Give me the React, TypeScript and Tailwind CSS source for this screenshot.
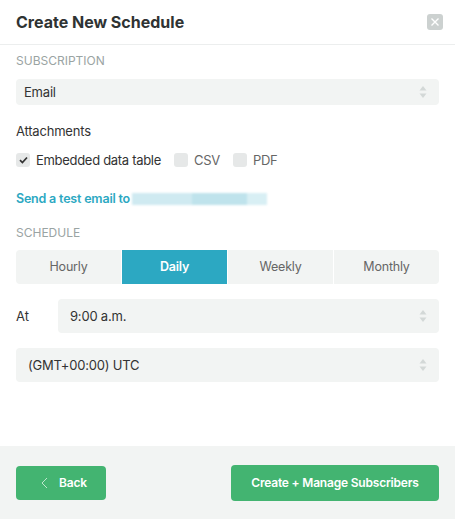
const Arrows = () => (
  <svg width="8" height="14" viewBox="0 0 8 14" className="shrink-0">
    <path d="M4 1 L7.5 5.5 H0.5 Z" fill="#d3d8d7" />
    <path d="M4 13 L7.5 8.5 H0.5 Z" fill="#d3d8d7" />
  </svg>
);

const Select = ({ value, className = "" }: { value: string; className?: string }) => (
  <div
    className={`flex items-center justify-between rounded bg-[#f2f4f3] text-[13px] tracking-[-0.2px] text-[#333] ${className}`}
  >
    <span>{value}</span>
    <Arrows />
  </div>
);

const Check = ({ checked, label }: { checked?: boolean; label: string }) => (
  <label className="flex items-center gap-[6px]">
    <span className="flex h-[14px] w-[14px] items-center justify-center rounded-[3px] bg-[#e6e8e8]">
      {checked && (
        <svg width="9" height="8" viewBox="0 0 9 8">
          <path d="M1 4.2 L3.4 6.5 L8 1.5" stroke="#333" strokeWidth="1.7" fill="none" />
        </svg>
      )}
    </span>
    <span className={checked ? "text-[#333]" : "text-[#666]"}>{label}</span>
  </label>
);

export default function App() {
  const tabs = ["Hourly", "Daily", "Weekly", "Monthly"];
  return (
    <div className="flex h-[519px] w-[455px] flex-col bg-white font-['Inter',sans-serif] text-[#333]">
      <div className="flex h-[45px] shrink-0 items-center justify-between border-b border-[#eceeee] pl-4 pr-3">
        <h1 className="text-[16px] font-bold text-[#2f3333]">Create New Schedule</h1>
        <button className="flex h-4 w-4 items-center justify-center rounded-[3px] bg-[#ccd1d0]">
          <svg width="10" height="10" viewBox="0 0 10 10">
            <path d="M1.5 1.5 L8.5 8.5 M8.5 1.5 L1.5 8.5" stroke="white" strokeWidth="1.4" />
          </svg>
        </button>
      </div>

      <div className="flex flex-1 flex-col px-4 leading-[16px]">
        <div className="mt-[8px] text-[12px] text-[#9aa4a3]">SUBSCRIPTION</div>
        <Select value="Email" className="mt-[10px] h-[26px] pl-2 pr-3" />

        <div className="mt-[18px] text-[13px] tracking-[-0.2px]">Attachments</div>
        <div className="mt-[13px] flex h-4 items-center gap-[13px] text-[13px] tracking-[-0.3px]">
          <Check checked label="Embedded data table" />
          <Check label="CSV" />
          <Check label="PDF" />
        </div>

        <div className="mt-[23px] flex items-center text-[12.5px] font-semibold tracking-[-0.2px] text-[#2ca8c2]">
          <span>Send a test email to</span>
          <span className="ml-[2px] flex h-[12px] w-[135px] items-center blur-[1px]">
            <span className="h-full w-[60px] bg-[#cfeaf1]" />
            <span className="h-full w-[55px] bg-[#bfe3ec]" />
            <span className="h-full w-[20px] bg-[#d8eff4]" />
          </span>
        </div>

        <div className="mt-[18px] text-[12px] text-[#9aa4a3]">SCHEDULE</div>
        <div className="mt-[9px] grid h-[34px] grid-cols-4 gap-px overflow-hidden rounded text-[12.5px] tracking-[-0.2px]">
          {tabs.map((t) => (
            <div
              key={t}
              className={
                t === "Daily"
                  ? "flex items-center justify-center bg-[#2ca8c2] font-semibold text-white"
                  : "flex items-center justify-center bg-[#f2f4f3] text-[#666]"
              }
            >
              {t}
            </div>
          ))}
        </div>

        <div className="mt-[15px] flex items-center">
          <span className="w-[42px] text-[13px]">At</span>
          <Select value="9:00 a.m." className="h-[34px] flex-1 pl-3 pr-3" />
        </div>
        <Select value="(GMT+00:00) UTC" className="mt-[15px] h-[34px] pl-[12px] pr-3" />
      </div>

      <div className="flex h-[73px] shrink-0 items-center justify-between bg-[#f2f4f3] px-4">
        <button className="flex h-[34px] w-[90px] items-center gap-[11px] rounded bg-[#43b471] pl-[25px] text-[12px] font-semibold tracking-[-0.2px] text-white">
          <svg width="7" height="12" viewBox="0 0 7 12">
            <path d="M6 1 L1 6 L6 11" stroke="#bfe6cd" strokeWidth="1" fill="none" />
          </svg>
          Back
        </button>
        <button className="flex h-[36px] w-[208px] items-center justify-center rounded bg-[#43b471] text-[12px] font-semibold tracking-[-0.2px] text-white">
          Create + Manage Subscribers
        </button>
      </div>
    </div>
  );
}
